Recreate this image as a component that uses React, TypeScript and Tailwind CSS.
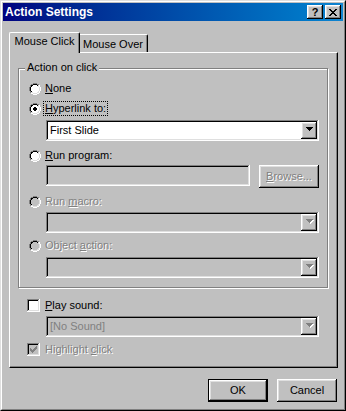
import React from "react";

const RAISED =
  "shadow-[inset_-1px_-1px_0_#000,inset_1px_1px_0_#fff,inset_-2px_-2px_0_#808080,inset_2px_2px_0_#dfdfdf]";
const SUNKEN =
  "shadow-[inset_-1px_-1px_0_#fff,inset_1px_1px_0_#808080,inset_-2px_-2px_0_#dfdfdf,inset_2px_2px_0_#000]";
const DIS = "text-[#808080] [text-shadow:1px_1px_0_#fff]";

const OUTER: [number, number[]][] = [
  [0, [4, 5, 6, 7]],
  [1, [2, 3, 8, 9]],
  [2, [1, 10]],
  [3, [1, 10]],
  [4, [0, 11]],
  [5, [0, 11]],
  [6, [0, 11]],
  [7, [0, 11]],
  [8, [1, 10]],
  [9, [1, 10]],
  [10, [2, 3, 8, 9]],
  [11, [4, 5, 6, 7]],
];
const INNER: [number, number[]][] = [
  [1, [4, 5, 6, 7]],
  [2, [2, 3, 8, 9]],
  [3, [2, 9]],
  [4, [1, 10]],
  [5, [1, 10]],
  [6, [1, 10]],
  [7, [1, 10]],
  [8, [2, 9]],
  [9, [2, 3, 8, 9]],
  [10, [4, 5, 6, 7]],
];
const FILL: [number, number, number][] = [
  [2, 4, 7],
  [3, 3, 8],
  [4, 2, 9],
  [5, 2, 9],
  [6, 2, 9],
  [7, 2, 9],
  [8, 3, 8],
  [9, 4, 7],
];
const DOT: [number, number, number][] = [
  [4, 5, 6],
  [5, 4, 7],
  [6, 4, 7],
  [7, 5, 6],
];

function Radio({ checked = false, disabled = false }: { checked?: boolean; disabled?: boolean }) {
  const px: React.ReactNode[] = [];
  OUTER.forEach(([r, cols]) =>
    cols.forEach((c) =>
      px.push(<rect key={`o${r}-${c}`} x={c} y={r} width={1} height={1} fill={r + c <= 10 ? "#808080" : "#ffffff"} />)
    )
  );
  INNER.forEach(([r, cols]) =>
    cols.forEach((c) =>
      px.push(<rect key={`i${r}-${c}`} x={c} y={r} width={1} height={1} fill={r + c <= 10 ? "#000000" : "#dfdfdf"} />)
    )
  );
  FILL.forEach(([r, a, b]) =>
    px.push(<rect key={`f${r}`} x={a} y={r} width={b - a + 1} height={1} fill={disabled ? "#c0c0c0" : "#ffffff"} />)
  );
  if (checked)
    DOT.forEach(([r, a, b]) =>
      px.push(<rect key={`d${r}`} x={a} y={r} width={b - a + 1} height={1} fill={disabled ? "#808080" : "#000000"} />)
    );
  return (
    <svg width={12} height={12} viewBox="0 0 12 12" shapeRendering="crispEdges" className="shrink-0">
      {px}
    </svg>
  );
}

function Check({ checked = false, disabled = false }: { checked?: boolean; disabled?: boolean }) {
  const tops = [2, 3, 4, 3, 2, 1, 0];
  return (
    <div
      className={`flex h-[13px] w-[13px] shrink-0 items-center justify-center ${SUNKEN} ${
        disabled ? "bg-[#c0c0c0]" : "bg-white"
      }`}
    >
      {checked && (
        <svg width={7} height={7} viewBox="0 0 7 7" shapeRendering="crispEdges">
          {tops.map((t, i) => (
            <rect key={i} x={i} y={t} width={1} height={3} fill={disabled ? "#808080" : "#000000"} />
          ))}
        </svg>
      )}
    </div>
  );
}

function Arrow({ disabled = false }: { disabled?: boolean }) {
  const rows = (ox: number, oy: number, fill: string) =>
    [0, 1, 2, 3].map((r) => (
      <rect key={`${fill}${r}`} x={ox + r} y={oy + r} width={7 - 2 * r} height={1} fill={fill} />
    ));
  return (
    <svg width={8} height={5} viewBox="0 0 8 5" shapeRendering="crispEdges" className="ml-[1px] mt-[1px]">
      {disabled ? [...rows(1, 1, "#ffffff"), ...rows(0, 0, "#808080")] : rows(0, 0, "#000000")}
    </svg>
  );
}

function Combo({ text, disabled = false, dimText = false }: { text?: string; disabled?: boolean; dimText?: boolean }) {
  return (
    <div
      className={`flex h-[21px] w-[273px] items-center ${SUNKEN} ${disabled ? "bg-[#c0c0c0]" : "bg-white"}`}
    >
      <span className={`flex-1 pl-[4px] leading-[13px] ${dimText ? "text-[#808080]" : "text-black"}`}>{text}</span>
      <div className={`mr-[2px] flex h-[17px] w-[16px] items-start justify-center bg-[#c0c0c0] pt-[4px] ${RAISED}`}>
        <Arrow disabled={disabled} />
      </div>
    </div>
  );
}

function RadioRow({
  checked = false,
  disabled = false,
  focus = false,
  children,
}: {
  checked?: boolean;
  disabled?: boolean;
  focus?: boolean;
  children: React.ReactNode;
}) {
  return (
    <div className="flex h-[15px] items-center">
      <Radio checked={checked} disabled={disabled} />
      <span
        className={`ml-[2px] h-[15px] border border-dotted px-[1px] leading-[13px] ${
          focus ? "border-black" : "border-transparent"
        } ${disabled ? DIS : ""}`}
      >
        {children}
      </span>
    </div>
  );
}

function CheckRow({
  checked = false,
  disabled = false,
  children,
}: {
  checked?: boolean;
  disabled?: boolean;
  children: React.ReactNode;
}) {
  return (
    <div className="flex h-[15px] items-center">
      <Check checked={checked} disabled={disabled} />
      <span className={`ml-[3px] h-[15px] border border-transparent px-[1px] leading-[13px] ${disabled ? DIS : ""}`}>
        {children}
      </span>
    </div>
  );
}

function TitleBtn({ children }: { children: React.ReactNode }) {
  return (
    <div className={`flex h-[14px] w-[16px] items-center justify-center bg-[#c0c0c0] ${RAISED}`}>{children}</div>
  );
}

function CloseGlyph() {
  const rows: [number, number[]][] = [
    [0, [0, 1, 6, 7]],
    [1, [1, 2, 5, 6]],
    [2, [2, 3, 4, 5]],
    [3, [3, 4]],
    [4, [2, 3, 4, 5]],
    [5, [1, 2, 5, 6]],
    [6, [0, 1, 6, 7]],
  ];
  return (
    <svg width={8} height={7} viewBox="0 0 8 7" shapeRendering="crispEdges" className="ml-[-1px]">
      {rows.map(([r, cols]) => cols.map((c) => <rect key={`${r}-${c}`} x={c} y={r} width={1} height={1} fill="#000" />))}
    </svg>
  );
}

function Button({ children, def = false }: { children: React.ReactNode; def?: boolean }) {
  if (def)
    return (
      <div className="h-[23px] w-[60px] border border-black">
        <div className={`flex h-full w-full items-center justify-center bg-[#c0c0c0] leading-[13px] ${RAISED}`}>
          {children}
        </div>
      </div>
    );
  return (
    <div className={`flex h-[23px] w-[60px] items-center justify-center bg-[#c0c0c0] leading-[13px] ${RAISED}`}>
      {children}
    </div>
  );
}

export default function App() {
  return (
    <div className="h-[411px] w-[346px] bg-[#c0c0c0] font-['Liberation_Sans',Arial,sans-serif] text-[11px] leading-[13px] text-black select-none">
      <div className="h-full w-full border border-t-[#dfdfdf] border-l-[#dfdfdf] border-r-black border-b-black">
        <div className="flex h-full w-full flex-col border border-t-white border-l-white border-r-[#808080] border-b-[#808080] p-[1px]">
          {/* Title bar */}
          <div className="flex h-[18px] shrink-0 items-center bg-linear-to-r from-[#000080] to-[#1084d0] pl-[2px] pr-[2px]">
            <span className="text-[12px] font-bold leading-[14px] text-white">Action Settings</span>
            <div className="ml-auto flex gap-[2px]">
              <TitleBtn>
                <span className="text-[11px] font-bold leading-[11px] text-black">?</span>
              </TitleBtn>
              <TitleBtn>
                <CloseGlyph />
              </TitleBtn>
            </div>
          </div>

          {/* Body */}
          <div className="flex flex-1 flex-col pl-[6px] pr-[6px]">
            {/* Tabs */}
            <div className="relative z-10 mb-[-1px] mt-[11px] flex h-[21px] items-end">
              <div className="flex h-[21px] w-[71px] justify-center rounded-tl-[2px] rounded-tr-[2px] border-l border-t border-r border-l-white border-t-white border-r-black bg-[#c0c0c0] pt-[2px] shadow-[inset_-1px_0_0_#808080]">
                Mouse Click
              </div>
              <div className="mb-[1px] flex h-[18px] w-[68px] rounded-tr-[2px] border-t border-r border-t-white border-r-black bg-[#c0c0c0] pl-[3px] pt-[3px] shadow-[inset_-1px_0_0_#808080]">
                Mouse Over
              </div>
            </div>

            {/* Panel */}
            <div className="flex h-[316px] w-[329px] flex-col border border-t-white border-l-white border-r-black border-b-black pl-[8px] pt-[15px] shadow-[inset_-1px_-1px_0_#808080]">
              {/* Group box */}
              <div className="relative flex h-[220px] w-[310px] flex-col border border-[#808080] pl-[10px] shadow-[inset_1px_1px_0_#fff,1px_1px_0_#fff]">
                <span className="absolute left-[6px] top-[-8px] bg-[#c0c0c0] px-[2px] leading-[13px]">
                  Action on click
                </span>

                <div className="mt-[12px]">
                  <RadioRow>
                    <u>N</u>one
                  </RadioRow>
                </div>
                <div className="mt-[5px]">
                  <RadioRow checked focus>
                    <u>H</u>yperlink to:
                  </RadioRow>
                </div>
                <div className="ml-[17px] mt-[4px]">
                  <Combo text="First Slide" />
                </div>
                <div className="mt-[7px]">
                  <RadioRow>
                    <u>R</u>un program:
                  </RadioRow>
                </div>
                <div className="ml-[17px] mt-[2px] flex h-[23px] items-start gap-[9px]">
                  <div className={`h-[21px] w-[204px] bg-[#c0c0c0] ${SUNKEN}`} />
                  <div className={`flex h-[23px] w-[60px] items-center justify-center bg-[#c0c0c0] ${RAISED}`}>
                    <span className={`leading-[13px] ${DIS}`}>
                      <u>B</u>rowse...
                    </span>
                  </div>
                </div>
                <div className="mt-[6px]">
                  <RadioRow disabled>
                    Run <u>m</u>acro:
                  </RadioRow>
                </div>
                <div className="ml-[17px] mt-[3px]">
                  <Combo disabled />
                </div>
                <div className="mt-[5px]">
                  <RadioRow disabled>
                    Object <u>a</u>ction:
                  </RadioRow>
                </div>
                <div className="ml-[17px] mt-[4px]">
                  <Combo disabled />
                </div>
              </div>

              <div className="ml-[9px] mt-[10px]">
                <CheckRow>
                  <u>P</u>lay sound:
                </CheckRow>
              </div>
              <div className="ml-[28px] mt-[3px]">
                <Combo text="[No Sound]" disabled dimText />
              </div>
              <div className="ml-[9px] mt-[5px]">
                <CheckRow checked disabled>
                  Highlight <u>c</u>lick
                </CheckRow>
              </div>
            </div>

            {/* Buttons */}
            <div className="mt-[11px] flex justify-end gap-[9px]">
              <Button def>OK</Button>
              <Button>Cancel</Button>
            </div>
          </div>
        </div>
      </div>
    </div>
  );
}
